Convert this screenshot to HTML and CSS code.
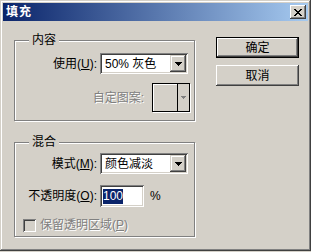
FILE: index.html
```html
<!DOCTYPE html>
<html>
<head>
<meta charset="utf-8">
<title>填充</title>
<link rel="stylesheet" href="styles.css">
</head>
<body>
<div class="window">
  <div class="titlebar">
    <span class="title">填充</span>
    <span class="close"><svg width="8" height="7" viewBox="0 0 8 7"><path d="M0 0h2v1h1v1h2v-1h1v-1h2v1h-1v1h-1v1h-1v1h1v1h1v1h1v1h-2v-1h-1v-1h-2v1h-1v1h-2v-1h1v-1h1v-1h1v-1h-1v-1h-1v-1h-1z" fill="#000"/></svg></span>
  </div>
  <div class="content">
    <div class="groups">
      <div class="group g1">
        <span class="legend">内容</span>
        <div class="row">
          <span class="lbl">使用(<u>U</u>):</span>
          <div class="combo"><span class="val">50% 灰色</span><span class="drop"><svg width="7" height="4" viewBox="0 0 7 4"><path d="M0 0h7v1h-1v1h-1v1h-1v1h-1v-1h-1v-1h-1v-1h-1z" fill="#000"/></svg></span></div>
        </div>
        <div class="row prow">
          <span class="lbl dis">自定图案:</span>
          <div class="pattern"><span class="swatch"></span><span class="parrow"><svg width="5" height="3" viewBox="0 0 5 3"><path d="M0 0h5v1h-1v1h-1v1h-1v-1h-1v-1h-1z" fill="#808080"/></svg></span></div>
        </div>
      </div>
      <div class="group g2">
        <span class="legend">混合</span>
        <div class="row">
          <span class="lbl">模式(<u>M</u>):</span>
          <div class="combo"><span class="val">颜色减淡</span><span class="drop"><svg width="7" height="4" viewBox="0 0 7 4"><path d="M0 0h7v1h-1v1h-1v1h-1v1h-1v-1h-1v-1h-1v-1h-1z" fill="#000"/></svg></span></div>
        </div>
        <div class="row orow">
          <span class="lbl">不透明度(<u>O</u>):</span>
          <div class="field"><span class="sel">100</span></div>
          <span class="pct">%</span>
        </div>
        <div class="row crow">
          <span class="check"></span>
          <span class="dis">保留透明区域(<u>P</u>)</span>
        </div>
      </div>
    </div>
    <div class="buttons">
      <div class="btn default">确定</div>
      <div class="btn">取消</div>
    </div>
  </div>
</div>
</body>
</html>
```

FILE: styles.css
```css
* { box-sizing: border-box; }
html, body { margin: 0; padding: 0; }
body {
  background: #d4d0c8;
  font-family: "Liberation Sans", "Noto Sans CJK SC", sans-serif;
  font-size: 12px;
  line-height: 14px;
  color: #000;
}
.window {
  width: 311px;
  height: 251px;
  padding: 3px;
  background: #d4d0c8;
  box-shadow: inset -1px -1px #404040, inset 1px 1px #d4d0c8, inset -2px -2px #808080, inset 2px 2px #fff;
}
.titlebar {
  height: 18px;
  display: flex;
  align-items: center;
  justify-content: space-between;
  padding: 0 2px 0 2px;
  background: linear-gradient(to right, #0a246a, #a6caf0);
}
.title {
  color: #fff;
  font-weight: bold;
  font-size: 12px;
  padding-left: 1px;
  letter-spacing: 1px;
}
.close {
  width: 16px;
  height: 14px;
  display: flex;
  align-items: center;
  justify-content: center;
  background: #d4d0c8;
  box-shadow: inset -1px -1px #404040, inset 1px 1px #fff, inset -2px -2px #808080;
}
.content {
  display: flex;
  align-items: flex-start;
  padding: 16px 0 0 11px;
  gap: 21px;
}
.groups {
  width: 181px;
  padding-top: 3px;
  display: flex;
  flex-direction: column;
  gap: 21px;
}
.group {
  position: relative;
  border: 1px solid #808080;
  box-shadow: inset 1px 1px #fff, 1px 1px #fff;
  display: flex;
  flex-direction: column;
}
.g1 { height: 81px; padding: 12px 0 0 0; gap: 9px; }
.g2 { height: 95px; padding: 10px 0 0 0; gap: 11px; }
.legend {
  position: absolute;
  top: -8px;
  left: 14px;
  padding: 0 3px;
  background: #d4d0c8;
  line-height: 14px;
}
.row {
  display: flex;
  align-items: center;
}
.lbl {
  width: 82px;
  text-align: right;
  margin-right: 3px;
  white-space: nowrap;
}
.combo {
  width: 88px;
  height: 21px;
  background: #fff;
  display: flex;
  align-items: center;
  justify-content: space-between;
  padding: 2px;
  box-shadow: inset 1px 1px #808080, inset -1px -1px #fff, inset 2px 2px #404040, inset -2px -2px #d4d0c8;
}
.val { padding-left: 3px; }
.drop {
  width: 16px;
  height: 17px;
  background: #d4d0c8;
  display: flex;
  align-items: center;
  justify-content: center;
  box-shadow: inset -1px -1px #404040, inset 1px 1px #d4d0c8, inset -2px -2px #808080, inset 2px 2px #fff;
}
.prow { justify-content: flex-end; padding-right: 4px; }
.prow .lbl { width: auto; margin-right: 8px; }
.pattern {
  width: 38px;
  height: 29px;
  display: flex;
  border: 1px solid #000;
  box-shadow: 1px 1px #fff;
}
.swatch {
  flex: 1;
  border-right: 1px solid #000;
  box-shadow: inset 1px 1px #fff;
}
.parrow {
  width: 11px;
  display: flex;
  align-items: center;
  justify-content: center;
}
.dis {
  color: #808080;
  text-shadow: 1px 1px #fff;
}
.field {
  width: 44px;
  height: 22px;
  background: #fff;
  padding: 3px 3px;
  display: flex;
  align-items: center;
  box-shadow: inset 1px 1px #808080, inset -1px -1px #fff, inset 2px 2px #404040, inset -2px -2px #d4d0c8;
}
.sel {
  background: #0a246a;
  color: #fff;
  line-height: 15px;
}
.pct { margin-left: 6px; }
.orow .lbl { margin-right: 3px; }
.crow { padding-left: 8px; gap: 4px; }
.check {
  width: 13px;
  height: 13px;
  background: #d4d0c8;
  box-shadow: inset 1px 1px #808080, inset -1px -1px #fff, inset 2px 2px #404040, inset -2px -2px #d4d0c8;
}
.buttons {
  display: flex;
  flex-direction: column;
  gap: 7px;
}
.btn {
  width: 83px;
  height: 21px;
  display: flex;
  align-items: center;
  justify-content: center;
  background: #d4d0c8;
  box-shadow: inset -1px -1px #404040, inset 1px 1px #fff, inset -2px -2px #808080, inset 2px 2px #d4d0c8;
}
.btn.default {
  box-shadow: inset 0 0 0 1px #000, inset -2px -2px #404040, inset 2px 2px #fff, inset -3px -3px #808080;
}
```
